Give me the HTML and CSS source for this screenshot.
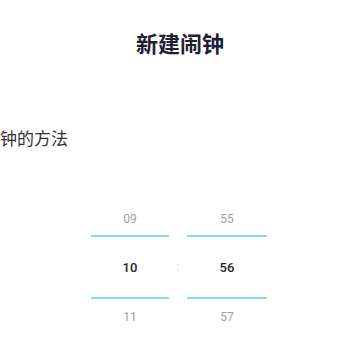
FILE: index.html
```html
<!DOCTYPE html>
<html>
<head>
<meta charset="utf-8">
<link rel="stylesheet" href="styles.css">
</head>
<body>
<div class="page">
  <div class="title">新建闹钟</div>
  <div class="desc">闹钟的方法</div>
  <div class="picker">
    <div class="col col-h">
      <div class="cell top">09</div>
      <div class="cell mid">10</div>
      <div class="cell bot">11</div>
    </div>
    <div class="col col-sep">
      <div class="cell top"></div>
      <div class="cell mid sep">:</div>
      <div class="cell bot"></div>
    </div>
    <div class="col col-m">
      <div class="cell top">55</div>
      <div class="cell mid">56</div>
      <div class="cell bot">57</div>
    </div>
  </div>
</div>
</body>
</html>
```
FILE: styles.css
```css
html, body {
  margin: 0;
  padding: 0;
  background: #ffffff;
}
.page {
  width: 360px;
  height: 360px;
  overflow: hidden;
  font-family: "Noto Sans CJK SC", "Noto Sans", sans-serif;
}
.title {
  padding-top: 27px;
  line-height: 30px;
  font-size: 22px;
  font-weight: 700;
  color: #1f2033;
  text-align: center;
}
.desc {
  margin-top: 69px;
  margin-left: -17px;
  line-height: 24px;
  font-size: 17px;
  color: #333333;
  white-space: nowrap;
}
.picker {
  margin-top: 53px;
  padding-left: 91px;
  display: flex;
  font-family: Roboto, "Noto Sans", sans-serif;
}
.col {
  display: flex;
  flex-direction: column;
}
.col-h { width: 78px; }
.col-sep { width: 18px; }
.col-m { width: 80px; }
.cell {
  display: flex;
  align-items: center;
  justify-content: center;
  font-size: 12px;
  color: #a0a0a0;
}
.top { height: 32px; }
.bot { height: 36px; }
.mid {
  height: 60px;
  font-size: 13px;
  font-weight: 500;
  color: #262626;
}
.col-h .mid, .col-m .mid {
  border-top: 2px solid #8cd6f3;
  border-bottom: 2px solid #8cd6f3;
}
.col-sep .mid {
  height: 64px;
  color: #d6d6d6;
  font-weight: 400;
  font-size: 12px;
}
```
